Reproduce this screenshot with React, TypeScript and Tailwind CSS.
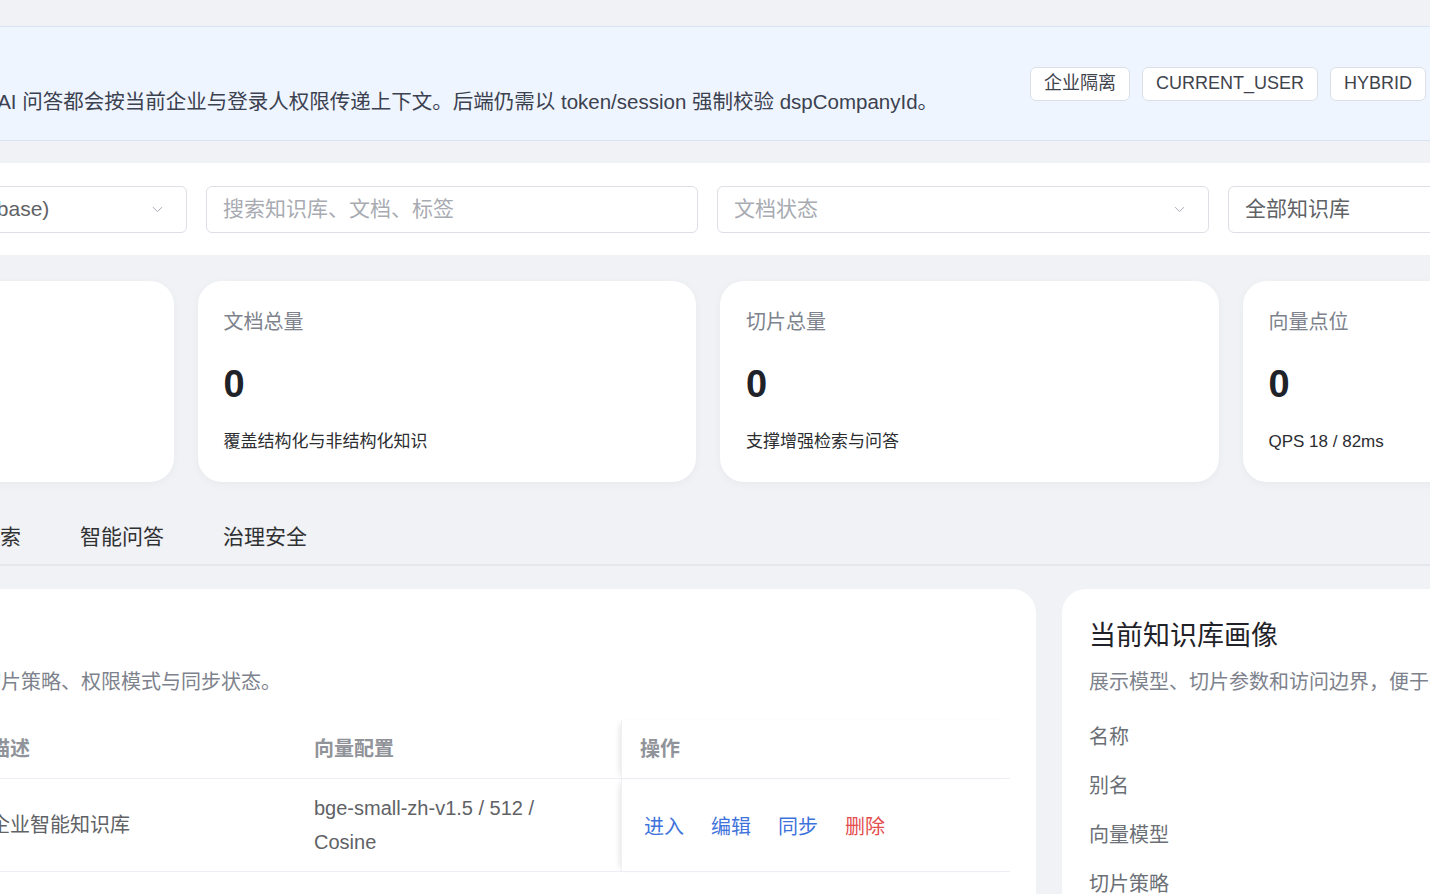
import { ChevronDown } from "lucide-react";

const tags = ["企业隔离", "CURRENT_USER", "HYBRID"];

const stats = [
  { label: "知识库数量", value: "1", sub: "当前企业可访问" },
  { label: "文档总量", value: "0", sub: "覆盖结构化与非结构化知识" },
  { label: "切片总量", value: "0", sub: "支撑增强检索与问答" },
  { label: "向量点位", value: "0", sub: "QPS 18 / 82ms" },
];

const tabs = ["知识库", "文档管理", "语义检索", "智能问答", "治理安全"];

const profile = ["名称", "别名", "向量模型", "切片策略", "权限模式"];

function Select({ text, placeholder }: { text: string; placeholder?: boolean }) {
  return (
    <div className="w-[492px] h-[47px] shrink-0 rounded-md border border-[#dcdfe6] bg-white pl-4 pr-[20px] flex items-center justify-between">
      <span className={placeholder ? "text-[#a8abb2]" : "text-[#606266]"}>{text}</span>
      <ChevronDown size={17} strokeWidth={1.4} className="text-[#a8abb2]" />
    </div>
  );
}

export default function App() {
  return (
    <div className="w-[1430px] h-[894px] overflow-hidden bg-[#f0f2f5] font-['Liberation_Sans','Noto_Sans_CJK_SC',sans-serif]">
      <div className="ml-[-325px] w-[2066px] pt-[26px] flex flex-col">
        {/* banner */}
        <div className="h-[115px] rounded-2xl border border-[#d8e3f3] bg-[#eef5ff] pl-2 pr-6 flex items-center gap-6">
          <div className="w-[1322px] shrink-0 flex flex-col gap-2">
            <div className="text-[20px] leading-7 font-semibold text-[#1f2329]">数据隔离说明</div>
            <div className="text-[20.5px] leading-7 text-[#3c4150]">
              当前为企业隔离模式，知识检索与 AI 问答都会按当前企业与登录人权限传递上下文。后端仍需以 token/session 强制校验 dspCompanyId。
            </div>
          </div>
          <div className="flex gap-3">
            {tags.map((t) => (
              <span
                key={t}
                className="h-[34px] px-[13px] rounded-md border border-[#dcdfe6] bg-white text-[18px] text-[#3f434c] flex items-center"
              >
                {t}
              </span>
            ))}
          </div>
        </div>

        {/* filters */}
        <div className="mt-[22px] h-[92px] rounded-2xl bg-white px-5 flex items-center gap-[19px] text-[21px]">
          <Select text="默认知识库 (public knowledge base)" />
          <div className="w-[492px] h-[47px] shrink-0 rounded-md border border-[#dcdfe6] bg-white px-4 flex items-center text-[#a8abb2]">
            搜索知识库、文档、标签
          </div>
          <Select text="文档状态" placeholder />
          <Select text="全部知识库" />
        </div>

        {/* stats */}
        <div className="mt-[26px] grid grid-cols-4 gap-[24px]">
          {stats.map((s) => (
            <div key={s.label} className="h-[201px] rounded-[24px] bg-white shadow-[0_2px_10px_rgba(15,23,42,0.04)] px-[26px] pt-[27px] flex flex-col">
              <div className="text-[20px] leading-7 text-[#7d828c]">{s.label}</div>
              <div className="mt-[25px] text-[38px] leading-[46px] font-bold text-[#1f2329]">{s.value}</div>
              <div className="mt-[23px] text-[17px] leading-6 text-[#2b2d31]">{s.sub}</div>
            </div>
          ))}
        </div>

        {/* tabs */}
        <div className="pt-[28px] border-b-2 border-[#e4e7ed] flex gap-[59px] ml-[-3px] text-[21px]">
          {tabs.map((t, i) => (
            <div
              key={t}
              className={`h-[54px] flex items-center ${i === 0 ? "text-[#409eff] border-b-2 border-[#409eff] -mb-[2px]" : "text-[#303133]"}`}
            >
              {t}
            </div>
          ))}
        </div>

        {/* content */}
        <div className="mt-[23px] flex gap-[26px]">
          <div className="w-[1361px] shrink-0 h-[420px] rounded-[24px] bg-white px-[26px] pt-[29px]">
            <div className="text-[27px] leading-9 text-[#1f2329]">知识库列表</div>
            <div className="mt-[14px] text-[20px] leading-7 text-[#7d828c]">
              集中管理各知识库的向量模型、切片策略、权限模式与同步状态。
            </div>
            <div className="mt-[24px] grid grid-cols-[273px_324px_323px_389px] text-[20px]">
              <div className="h-[59px] px-4 flex items-center font-bold text-[#909399] border-b border-[#ebeef5]">知识库名称</div>
              <div className="h-[59px] px-4 flex items-center font-bold text-[#909399] border-b border-[#ebeef5]">描述</div>
              <div className="h-[59px] px-4 flex items-center font-bold text-[#909399] border-b border-[#ebeef5]">向量配置</div>
              <div className="h-[59px] px-[18px] flex items-center font-bold text-[#909399] border-b border-[#ebeef5] border-l border-l-[#f0f1f4] shadow-[-5px_0_6px_-4px_rgba(0,0,0,0.12)]">
                操作
              </div>

              <div className="h-[93px] px-4 flex items-center text-[#606266] border-b border-[#ebeef5]">企业知识中心</div>
              <div className="h-[93px] px-4 flex items-center text-[#606266] border-b border-[#ebeef5]">企业智能知识库</div>
              <div className="h-[93px] px-4 flex items-center text-[#606266] border-b border-[#ebeef5]">
                <span className="max-w-[250px] leading-[34px]">bge-small-zh-v1.5 / 512 / Cosine</span>
              </div>
              <div className="h-[93px] px-[22px] pt-[4px] flex items-center gap-[27px] border-b border-[#ebeef5] border-l border-l-[#f0f1f4] shadow-[-5px_0_6px_-4px_rgba(0,0,0,0.12)]">
                <span className="text-[#3f73dc]">进入</span>
                <span className="text-[#3f73dc]">编辑</span>
                <span className="text-[#3f73dc]">同步</span>
                <span className="text-[#e34d4d]">删除</span>
              </div>
            </div>
          </div>

          <div className="flex-1 h-[420px] rounded-[24px] bg-white px-[27px] pt-[29px]">
            <div className="text-[27px] leading-9 text-[#1f2329]">当前知识库画像</div>
            <div className="mt-[14px] text-[20px] leading-7 text-[#7d828c]">
              展示模型、切片参数和访问边界，便于排查检索与问答结果。
            </div>
            <div className="mt-[27px] flex flex-col gap-[21px] text-[20px] leading-7 text-[#6b6f76]">
              {profile.map((p) => (
                <div key={p}>{p}</div>
              ))}
            </div>
          </div>
        </div>
      </div>
    </div>
  );
}
